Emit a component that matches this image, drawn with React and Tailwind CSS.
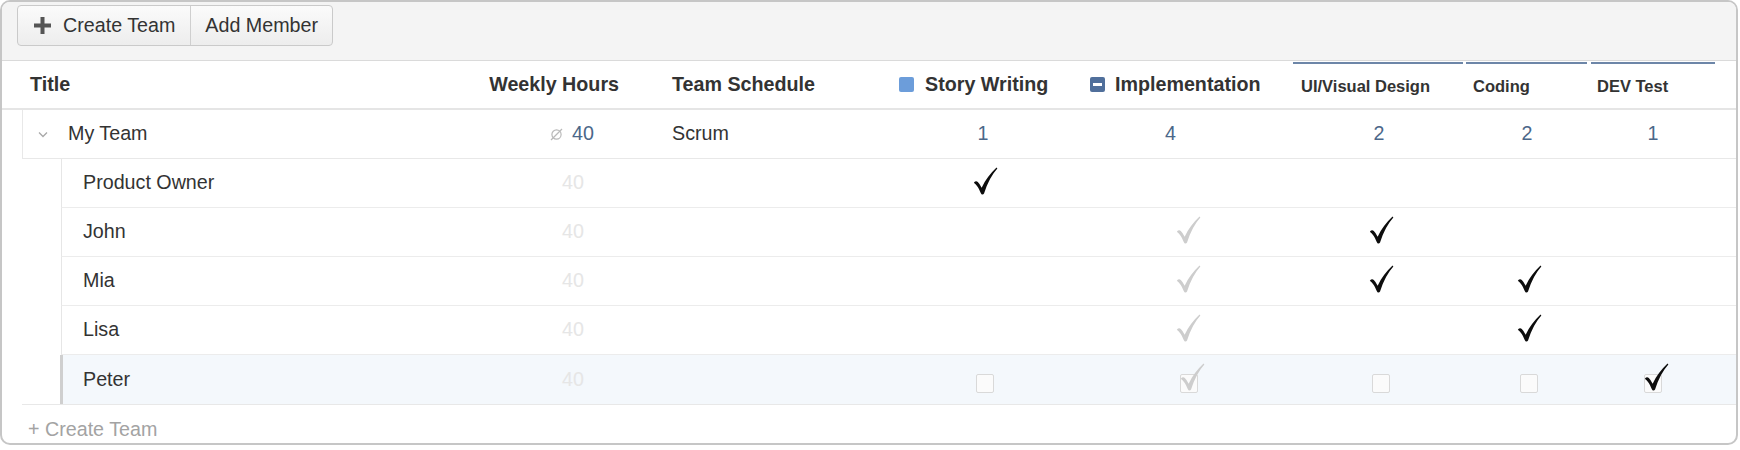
import React from "react";

const FONT = { fontFamily: '"Liberation Sans", Arial, Helvetica, sans-serif' };

function Check({ gray = false }) {
  return (
    <svg width="25" height="28" viewBox="0 0 24 28" preserveAspectRatio="none" className="block">
      <path
        d="M0.8 15.8 Q2.6 13.4 4.6 14.9 Q6.6 16.8 8.3 20.8 Q13 10 22.6 0.6 L23.4 1.6 Q15.5 10.5 10.6 26.6 Q9.8 27.8 8.5 27.4 Q7.8 27 7.2 25.5 Q4.8 19 0.8 15.8 Z"
        fill={gray ? "#cdcdcd" : "#0d0d0d"}
      />
    </svg>
  );
}

function Box({ mark }) {
  return (
    <div className="relative w-[18px] h-[19px] mt-[7px]">
      <div className="w-full h-full border border-[#d9d9d9] rounded-[2px] bg-[#fbfbfb]" />
      {mark && (
        <div className="absolute left-[0px] top-[-11px]">
          <Check gray={mark === "gray"} />
        </div>
      )}
    </div>
  );
}

function Plus() {
  return (
    <svg width="17" height="17" viewBox="0 0 17 17" className="block">
      <rect x="6.5" y="0" width="4" height="17" fill="#555" />
      <rect x="0" y="6.5" width="17" height="4" fill="#555" />
    </svg>
  );
}

function Chevron() {
  return (
    <svg width="10" height="7" viewBox="0 0 10 7" className="block">
      <polyline points="1,1.5 5,5.5 9,1.5" fill="none" stroke="#a8a8a8" strokeWidth="1.3" />
    </svg>
  );
}

function Empty() {
  return (
    <svg width="13" height="13" viewBox="0 0 13 13" className="block">
      <circle cx="6.5" cy="6.5" r="4.6" fill="none" stroke="#b9b9b9" strokeWidth="1.2" />
      <line x1="1" y1="12" x2="12" y2="1" stroke="#b9b9b9" strokeWidth="1.2" />
    </svg>
  );
}

const members = [
  { name: "Product Owner", cells: ["b", null, null, null, null] },
  { name: "John", cells: [null, "g", "b", null, null] },
  { name: "Mia", cells: [null, "g", "b", "b", null] },
  { name: "Lisa", cells: [null, "g", null, "b", null] },
];

function SkillCells({ cells, peter }) {
  const widths = ["w-[206px] pl-[4px]", "w-[207px] pr-[2px]", "w-[172px] pl-[4px]", "w-[124px] pl-[4px]", "w-[128px]"];
  return (
    <>
      {cells.map((c, i) => (
        <div key={i} className={`${widths[i]} flex items-center justify-center`}>
          {peter ? (
            <Box mark={c === "g" ? "gray" : c === "b" ? "black" : null} />
          ) : c ? (
            <div className="mt-[-4px]">
              <Check gray={c === "g"} />
            </div>
          ) : null}
        </div>
      ))}
    </>
  );
}

function MemberRow({ name, cells, peter, last }) {
  return (
    <div className="flex h-[49px] shrink-0">
      <div className={peter ? "w-[58px] shrink-0" : "w-[59px] shrink-0"} />
      <div
        className={`flex flex-1 ${last ? "" : "border-b"} border-[#ececec] ${
          peter ? "border-l-[3px] border-l-[#cfcfcf] bg-[#f4f8fc]" : "border-l border-l-[#e6e6e6]"
        }`}
      >
        <div className={`${peter ? "w-[407px] pl-[20px]" : "w-[408px] pl-[21px]"} flex items-center`}>
          {name}
        </div>
        <div className="w-[170px] flex items-center justify-end pr-[56px] text-[#e6e6e6]">40</div>
        <div className="w-[240px]" />
        <SkillCells cells={cells} peter={peter} />
      </div>
    </div>
  );
}

function SubHeader({ w, label, line }) {
  return (
    <div className={`${w} flex flex-col`}>
      <div className={`h-[2px] mt-[1px] bg-[#6d86a8] ${line}`} />
      <div className="flex-1 flex items-center pl-[8px] text-[16.5px]">{label}</div>
    </div>
  );
}

export default function App() {
  return (
    <div className="w-[1740px] h-[450px] bg-white" style={FONT}>
      <div className="w-[1738px] h-[445px] border-2 border-[#c6c6c6] rounded-[10px] overflow-hidden bg-white flex flex-col text-[19.7px] text-[#333]">
        {/* toolbar */}
        <div className="h-[59px] shrink-0 bg-[#f4f4f4] border-b border-[#dadada] flex items-start pt-[3px] pl-[15px]">
          <div className="flex h-[41px] border border-[#cacaca] rounded-[4px] bg-gradient-to-b from-[#fbfbfb] to-[#ededed]">
            <div className="flex items-center gap-[12px] pl-[16px] pr-[15px] border-r border-[#cfcfcf]">
              <Plus />
              <span>Create Team</span>
            </div>
            <div className="flex items-center px-[14px]">Add Member</div>
          </div>
        </div>

        {/* header */}
        <div className="flex h-[49px] shrink-0 border-b-2 border-[#e5e5e5] font-bold">
          <div className="w-[468px] pl-[28px] flex items-center">Title</div>
          <div className="w-[170px] pr-[21px] flex items-center justify-end">Weekly Hours</div>
          <div className="w-[240px] pl-[32px] flex items-center">Team Schedule</div>
          <div className="w-[206px] pl-[19px] flex items-center gap-[11px]">
            <span className="w-[15px] h-[15px] rounded-[2px] bg-[#6c9dda]" />
            Story Writing
          </div>
          <div className="w-[207px] pl-[4px] flex items-center gap-[10px]">
            <span className="w-[15px] h-[15px] rounded-[2px] bg-[#506f9b] flex items-center justify-center">
              <span className="w-[9px] h-[3px] bg-white" />
            </span>
            Implementation
          </div>
          <SubHeader w="w-[172px]" label="UI/Visual Design" line="mr-[2px]" />
          <SubHeader w="w-[124px]" label="Coding" line="ml-[1px] mr-[2px]" />
          <SubHeader w="w-[128px]" label="DEV Test" line="ml-[2px] mr-[2px]" />
        </div>

        {/* team row */}
        <div className="flex h-[49px] shrink-0">
          <div className="w-[20px] shrink-0" />
          <div className="flex flex-1 border-l border-b border-[#e8e8e8]">
            <div className="w-[447px] flex items-center pl-[15px]">
              <Chevron />
              <span className="ml-[20px]">My Team</span>
            </div>
            <div className="w-[170px] flex items-center justify-end pr-[46px] gap-[9px]">
              <Empty />
              <span className="text-[#4b6789]">40</span>
            </div>
            <div className="w-[240px] pl-[32px] flex items-center">Scrum</div>
            <div className="w-[206px] flex items-center justify-center text-[#4b6789]">1</div>
            <div className="w-[207px] flex items-center justify-center pr-[38px] text-[#4b6789]">4</div>
            <div className="w-[172px] flex items-center justify-center text-[#4b6789]">2</div>
            <div className="w-[124px] flex items-center justify-center text-[#4b6789]">2</div>
            <div className="w-[128px] flex items-center justify-center text-[#4b6789]">1</div>
          </div>
        </div>

        {members.map((m) => (
          <MemberRow key={m.name} name={m.name} cells={m.cells} />
        ))}
        <MemberRow name="Peter" cells={[null, "g", null, null, "b"]} peter last />

        {/* footer */}
        <div className="flex-1 ml-[20px] border-t border-[#e8e8e8] pl-[6px] pt-[10px] text-[#a3a3a3]">
          + Create Team
        </div>
      </div>
    </div>
  );
}
